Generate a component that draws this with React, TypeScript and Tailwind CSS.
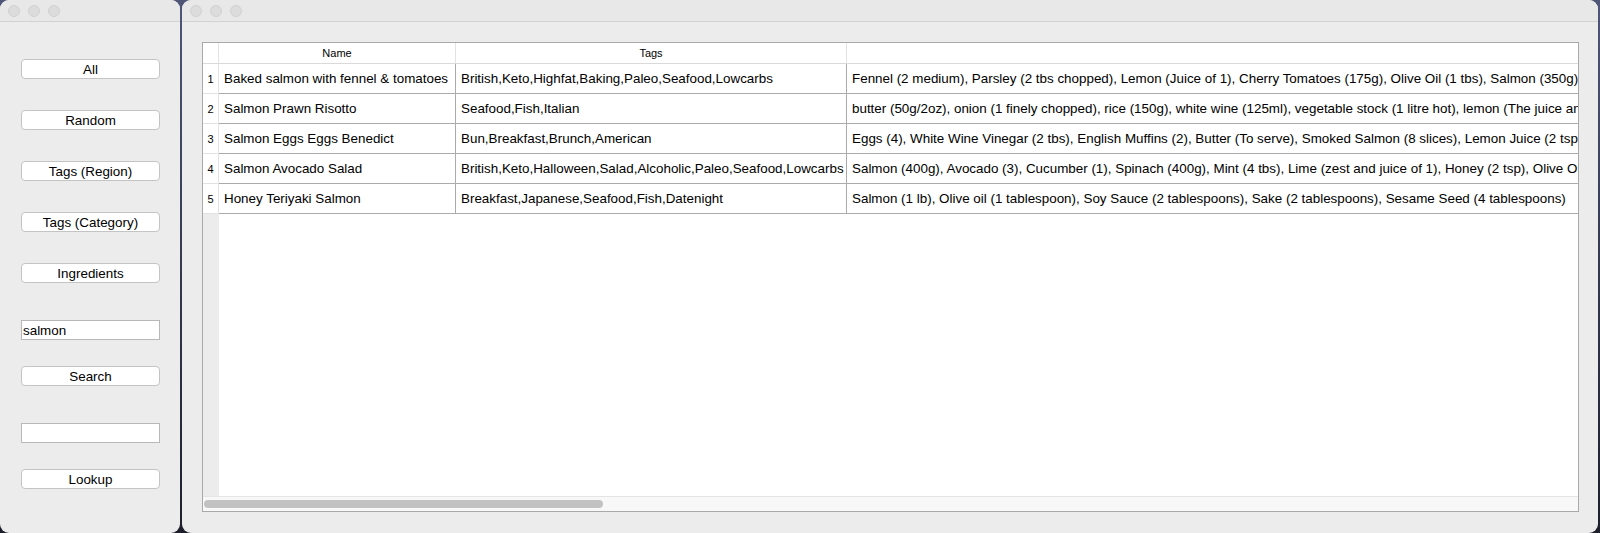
import React from 'react';

const font = { fontFamily: '"Liberation Sans", Arial, sans-serif' };

const recipes = [
  {
    name: 'Baked salmon with fennel & tomatoes',
    tags: 'British,Keto,Highfat,Baking,Paleo,Seafood,Lowcarbs',
    ingredients:
      'Fennel (2 medium), Parsley (2 tbs chopped), Lemon (Juice of 1), Cherry Tomatoes (175g), Olive Oil (1 tbs), Salmon (350g), Black Olives (to serve)',
  },
  {
    name: 'Salmon Prawn Risotto',
    tags: 'Seafood,Fish,Italian',
    ingredients:
      'butter (50g/2oz), onion (1 finely chopped), rice (150g), white wine (125ml), vegetable stock (1 litre hot), lemon (The juice and zest of one)',
  },
  {
    name: 'Salmon Eggs Eggs Benedict',
    tags: 'Bun,Breakfast,Brunch,American',
    ingredients:
      'Eggs (4), White Wine Vinegar (2 tbs), English Muffins (2), Butter (To serve), Smoked Salmon (8 slices), Lemon Juice (2 tsp), Egg Yolks (2)',
  },
  {
    name: 'Salmon Avocado Salad',
    tags: 'British,Keto,Halloween,Salad,Alcoholic,Paleo,Seafood,Lowcarbs',
    ingredients:
      'Salmon (400g), Avocado (3), Cucumber (1), Spinach (400g), Mint (4 tbs), Lime (zest and juice of 1), Honey (2 tsp), Olive Oil (3 tbs)',
  },
  {
    name: 'Honey Teriyaki Salmon',
    tags: 'Breakfast,Japanese,Seafood,Fish,Datenight',
    ingredients:
      'Salmon (1 lb), Olive oil (1 tablespoon), Soy Sauce (2 tablespoons), Sake (2 tablespoons), Sesame Seed (4 tablespoons)',
  },
];

const TrafficLights: React.FC = () => (
  <div className="flex items-center gap-2 pl-2">
    <span className="w-3 h-3 rounded-full bg-[#dcdcdc] border border-[#d0d0d0]" />
    <span className="w-3 h-3 rounded-full bg-[#dcdcdc] border border-[#d0d0d0]" />
    <span className="w-3 h-3 rounded-full bg-[#dcdcdc] border border-[#d0d0d0]" />
  </div>
);

const TitleBar: React.FC = () => (
  <div className="h-[22px] shrink-0 flex items-center bg-[#e8e8e8] border-b border-[#d2d2d2]">
    <TrafficLights />
  </div>
);

const Btn: React.FC<{ label: string; mt: string }> = ({ label, mt }) => (
  <button
    className={`${mt} h-[20px] w-[139px] shrink-0 bg-white border border-[#c4c4c4] rounded-[4px] text-[13.4px] text-black leading-none flex items-center justify-center pt-[2px]`}
  >
    {label}
  </button>
);

const Field: React.FC<{ value: string; mt: string }> = ({ value, mt }) => (
  <div
    className={`${mt} h-[20px] w-[139px] shrink-0 bg-white border border-[#b8b8b8] text-[13.4px] text-black leading-none flex items-center px-[1px] pt-[2px]`}
  >
    {value}
  </div>
);

export default function App() {
  return (
    <div
      className="w-[1600px] h-[533px] flex overflow-hidden bg-gradient-to-b from-[#4f5678] to-[#1d1f2c]"
      style={font}
    >
      {/* left window */}
      <div className="w-[180px] shrink-0 h-full flex flex-col bg-[#ececec] rounded-[9px] overflow-hidden">
        <TitleBar />
        <div className="flex flex-col pl-[21px]">
          <Btn label="All" mt="mt-[37px]" />
          <Btn label="Random" mt="mt-[31px]" />
          <Btn label="Tags (Region)" mt="mt-[31px]" />
          <Btn label="Tags (Category)" mt="mt-[31px]" />
          <Btn label="Ingredients" mt="mt-[31px]" />
          <Field value="salmon" mt="mt-[37px]" />
          <Btn label="Search" mt="mt-[26px]" />
          <Field value="" mt="mt-[37px]" />
          <Btn label="Lookup" mt="mt-[26px]" />
        </div>
      </div>

      <div className="w-[2px] shrink-0" />

      {/* right window */}
      <div className="w-[1416px] shrink-0 h-full flex flex-col bg-[#ececec] rounded-[9px] overflow-hidden">
        <TitleBar />
        <div className="flex-1 pt-[20px] pl-[20px] pr-[20px] pb-[21px]">
          <div className="h-full w-[1377px] flex flex-col border border-[#a9a9a9] bg-white overflow-hidden">
            {/* header */}
            <div className="h-[21px] shrink-0 flex border-b border-[#dadada] text-[11px] text-black">
              <div className="w-[16px] shrink-0 border-r border-[#e2e2e2]" />
              <div className="w-[237px] shrink-0 border-r border-[#e2e2e2] flex items-center justify-center">
                Name
              </div>
              <div className="w-[391px] shrink-0 border-r border-[#e2e2e2] flex items-center justify-center">
                Tags
              </div>
              <div className="flex-1" />
            </div>

            {/* rows */}
            {recipes.map((r, i) => (
              <div key={i} className="h-[30px] shrink-0 flex text-[13.4px] text-black whitespace-nowrap">
                <div className="w-[16px] shrink-0 border-r border-b border-[#e2e2e2] flex items-center justify-center text-[11px] pt-[1px]">
                  {i + 1}
                </div>
                <div className="w-[237px] shrink-0 border-r border-b border-[#ababab] flex items-center pl-[5px] pt-[1px] overflow-hidden">
                  {r.name}
                </div>
                <div className="w-[391px] shrink-0 border-r border-b border-[#ababab] flex items-center pl-[5px] pt-[1px] overflow-hidden">
                  {r.tags}
                </div>
                <div className="flex-1 min-w-0 border-b border-[#ababab] flex items-center pl-[5px] pt-[1px] overflow-hidden">
                  {r.ingredients}
                </div>
              </div>
            ))}

            {/* empty area */}
            <div className="flex-1 flex">
              <div className="w-[16px] shrink-0 bg-[#ececec]" />
              <div className="flex-1 bg-white" />
            </div>

            {/* horizontal scrollbar */}
            <div className="h-[15px] shrink-0 bg-[#f8f8f8] border-t border-[#e4e4e4] flex items-center pl-[1px]">
              <div className="w-[399px] h-[8px] rounded-full bg-[#c2c2c2]" />
            </div>
          </div>
        </div>
      </div>
    </div>
  );
}
